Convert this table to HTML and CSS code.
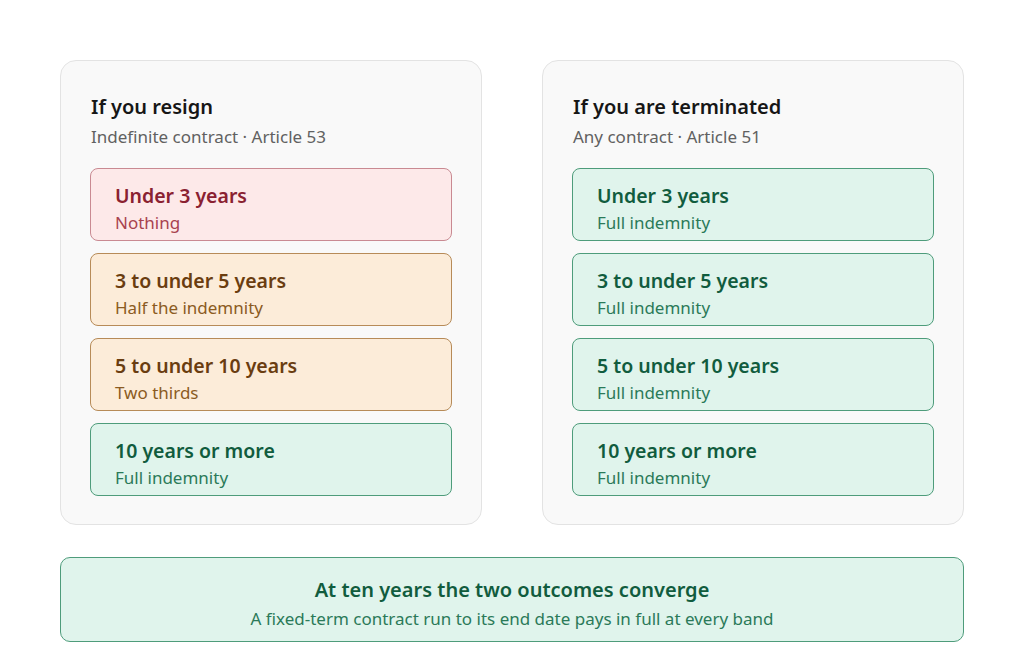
FILE: index.html
```html
<!DOCTYPE html>
<html lang="en">
<head>
<meta charset="utf-8">
<title>Indemnity comparison</title>
<link rel="stylesheet" href="styles.css">
</head>
<body>
<main class="page">
  <div class="columns">
    <section class="card">
      <h2 class="card-title">If you resign</h2>
      <p class="card-sub">Indefinite contract · Article 53</p>
      <div class="bands">
        <div class="band band-red">
          <div class="band-title">Under 3 years</div>
          <div class="band-sub">Nothing</div>
        </div>
        <div class="band band-amber">
          <div class="band-title">3 to under 5 years</div>
          <div class="band-sub">Half the indemnity</div>
        </div>
        <div class="band band-amber">
          <div class="band-title">5 to under 10 years</div>
          <div class="band-sub">Two thirds</div>
        </div>
        <div class="band band-green">
          <div class="band-title">10 years or more</div>
          <div class="band-sub">Full indemnity</div>
        </div>
      </div>
    </section>
    <section class="card">
      <h2 class="card-title">If you are terminated</h2>
      <p class="card-sub">Any contract · Article 51</p>
      <div class="bands">
        <div class="band band-green">
          <div class="band-title">Under 3 years</div>
          <div class="band-sub">Full indemnity</div>
        </div>
        <div class="band band-green">
          <div class="band-title">3 to under 5 years</div>
          <div class="band-sub">Full indemnity</div>
        </div>
        <div class="band band-green">
          <div class="band-title">5 to under 10 years</div>
          <div class="band-sub">Full indemnity</div>
        </div>
        <div class="band band-green">
          <div class="band-title">10 years or more</div>
          <div class="band-sub">Full indemnity</div>
        </div>
      </div>
    </section>
  </div>
  <section class="banner">
    <div class="banner-title">At ten years the two outcomes converge</div>
    <div class="banner-sub">A fixed-term contract run to its end date pays in full at every band</div>
  </section>
</main>
</body>
</html>
```

FILE: styles.css
```css
* { box-sizing: border-box; }
html, body { margin: 0; padding: 0; background: #ffffff; }
body {
  font-family: "Noto Sans", "Open Sans", "Liberation Sans", sans-serif;
  color: #1a1a1a;
}
.page {
  padding: 60px 60px 0;
  display: flex;
  flex-direction: column;
  gap: 32px;
}
.columns {
  display: grid;
  grid-template-columns: 1fr 1fr;
  gap: 60px;
}
.card {
  background: #f9f9f9;
  border: 1px solid #e3e3e3;
  border-radius: 16px;
  padding: 32px 29px 28px;
}
.card-title {
  margin: 0;
  font-size: 20px;
  line-height: 28px;
  font-weight: 560;
  color: #161616;
  padding-left: 1px;
}
.card-sub {
  margin: 3px 0 0;
  font-size: 17px;
  line-height: 26px;
  color: #616161;
  padding-left: 1px;
}
.bands {
  margin-top: 18px;
  display: flex;
  flex-direction: column;
  gap: 12px;
}
.band {
  height: 73px;
  border: 1px solid;
  border-radius: 8px;
  padding: 14px 24px 0;
}
.band-title {
  font-size: 19.5px;
  line-height: 26px;
  font-weight: 560;
}
.band-sub {
  margin-top: 2px;
  font-size: 17px;
  line-height: 24px;
}
.band-red { background: #fde9e9; border-color: #c98a92; }
.band-red .band-title { color: #8a2131; }
.band-red .band-sub { color: #a8424f; }
.band-amber { background: #fcecd9; border-color: #b78b58; }
.band-amber .band-title { color: #6a3d10; }
.band-amber .band-sub { color: #8b5b22; }
.band-green { background: #e0f4ec; border-color: #4e9c7b; }
.band-green .band-title { color: #115c3e; }
.band-green .band-sub { color: #2b7a59; }
.banner {
  background: #e0f4ec;
  border: 1px solid #4e9c7b;
  border-radius: 10px;
  height: 85px;
  padding-top: 18px;
  text-align: center;
}
.banner-title {
  font-size: 20px;
  line-height: 28px;
  font-weight: 560;
  color: #115c3e;
}
.banner-sub {
  margin-top: 3px;
  font-size: 17px;
  line-height: 24px;
  color: #2b7a59;
}
```
